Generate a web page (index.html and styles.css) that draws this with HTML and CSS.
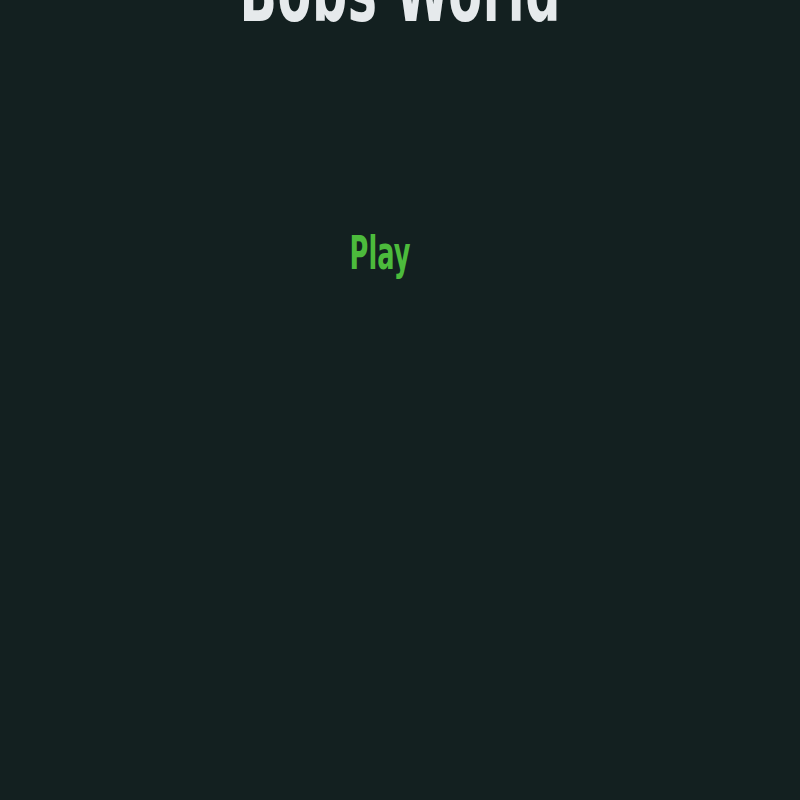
FILE: index.html
```html
<!DOCTYPE html>
<html lang="en">
<head>
  <meta charset="UTF-8">
  <title>Bobs World</title>
  <link rel="stylesheet" href="styles.css">
</head>
<body>
  <header class="title-bar">
    <h1 class="game-title">Bobs World</h1>
  </header>
  <main class="menu">
    <button class="menu-item">Play</button>
  </main>
</body>
</html>
```

FILE: styles.css
```css
html, body {
  height: 100%;
}
body {
  margin: 0;
  background: #132020;
  font-family: 'DejaVu Sans Condensed', sans-serif;
  overflow: hidden;
}
.title-bar {
  display: flex;
  justify-content: center;
  margin-top: -50px;
}
.game-title {
  margin: 0;
  color: #e6eaec;
  font-size: 84px;
  font-weight: 700;
  line-height: 1;
  letter-spacing: 1px;
  transform: scaleX(0.65);
}
.menu {
  display: flex;
  justify-content: center;
  padding-top: 196px;
  padding-right: 40px;
}
.menu-item {
  background: none;
  border: none;
  padding: 0;
  color: #4cbb3c;
  font-family: inherit;
  font-size: 46px;
  font-weight: 700;
  line-height: 1;
  cursor: pointer;
  transform: scaleX(0.62);
}
```
